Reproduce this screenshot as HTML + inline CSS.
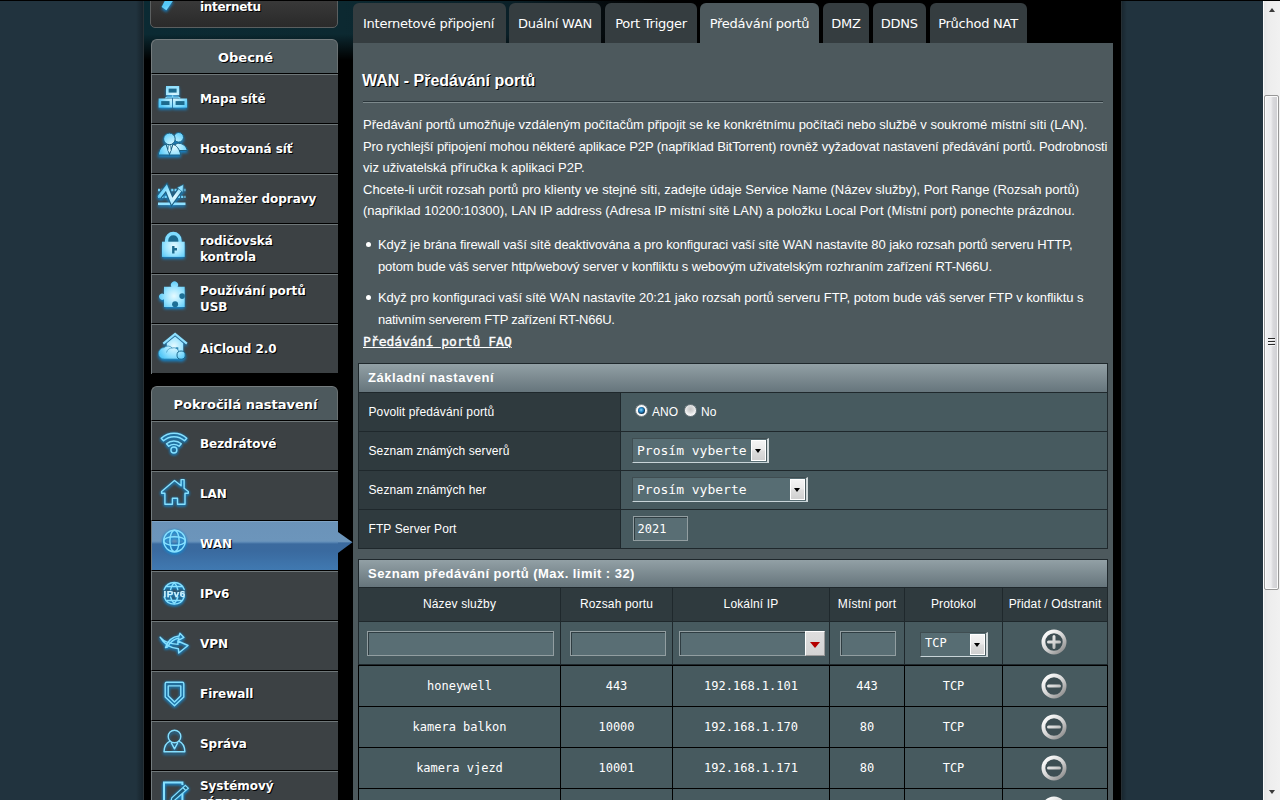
<!DOCTYPE html>
<html lang="cs">
<head>
<meta charset="utf-8">
<title>ASUS Wireless Router RT-N66U - Předávání portů</title>
<style>
*{box-sizing:border-box;}
html,body{margin:0;padding:0;}
body{width:1280px;height:800px;overflow:hidden;position:relative;background:#21333e;font-family:"Liberation Sans",Arial,sans-serif;font-size:12px;color:#fff;}
.abs{position:absolute;}
#topline{left:0;top:0;width:1280px;height:1px;background:#000;z-index:50;}
#band{left:143px;top:0;width:978px;height:800px;background:#000;}
#band:before{content:"";position:absolute;left:0;top:0;width:520px;height:62px;background:linear-gradient(180deg,rgba(0,0,0,0) 0px,rgba(0,0,0,0) 34px,#000 60px),linear-gradient(90deg,#0b2a33 0px,#0c2931 200px,#0a2028 365px,#04090b 470px,#000 520px);}
#shadowL{left:136px;top:0;width:7px;height:800px;background:linear-gradient(90deg,rgba(0,0,0,0),rgba(0,0,0,.3));}
#shadowR{left:1121px;top:0;width:6px;height:800px;background:linear-gradient(90deg,rgba(0,0,0,.28),rgba(0,0,0,0));}
#edgeL{left:143px;top:0;width:1px;height:800px;background:#293237;}
#edgeR{left:1121px;top:0;width:1px;height:800px;background:#262f34;}

/* ---------- sidebar ---------- */
.mfont{font-family:"DejaVu Sans",Verdana,sans-serif;font-weight:bold;text-shadow:1px 1px 0 #000;}
#qis{left:150px;top:-30px;width:188px;height:58px;border:1px solid #5b5f60;border-radius:5px;background:linear-gradient(180deg,#454545 0%,#3a3a3a 50%,#2a2a2a 100%);}
#qis span{position:absolute;left:49px;top:29px;font-size:12px;letter-spacing:-.3px;line-height:14px;}
#qis svg{position:absolute;left:0;top:29px;}
.grp{left:151px;width:187px;}
.grp .hd{height:34px;background:#4d595d;border:1px solid #757c7e;border-bottom:0;border-right-color:#6a7173;border-radius:6px 6px 0 0;text-align:center;font-size:13px;line-height:36px;padding-left:2px;overflow:hidden;}
.grp .it{position:relative;height:50px;border-top:1px solid #000;border-left:1px solid #747c7f;background:#3c4144;}
.grp .it:before{content:"";position:absolute;left:0;top:0;right:0;height:1px;background:#6f7779;}
.grp .it .tx{position:absolute;left:48px;top:1px;height:48px;display:flex;align-items:center;font-size:12px;letter-spacing:-.05px;line-height:16px;}
.grp.g2 .it .tx{top:-1px;}
.grp .it svg{position:absolute;left:0;top:2px;}
.grp .end{height:1px;background:#000;border-left:1px solid #747c7f;}
.grp .it.cur{background:linear-gradient(180deg,#6b93b9 0px,#6c95bb 20px,#5f8cb8 21px,#3b6a9e 23px,#3a6a9f 30px,#4079b1 49px);}
.grp .it.cur:after{content:"";position:absolute;left:186px;top:11px;width:15px;height:21px;background:linear-gradient(180deg,#6c95bb 0px,#6c95bb 9.5px,#3b6a9e 11px,#3b6b9f 21px);clip-path:polygon(0 0,14.5px 10.3px,0 21px);}
.grp .it.cur:before{background:#7fa3c4;}

/* ---------- tabs ---------- */
.tab{top:3px;height:40px;background:#353d40;border-radius:6px 6px 0 0;font-family:"DejaVu Sans",Verdana,sans-serif;font-size:13px;letter-spacing:-.25px;text-align:center;line-height:41px;color:#fff;white-space:nowrap;}
.tab.on{background:#4d595d;}
/* ---------- panel ---------- */
#panel{left:353px;top:43px;width:760px;height:760px;background:#4d595d;}
#title{left:9px;top:29px;font-size:16px;font-weight:bold;line-height:18px;text-shadow:1px 1px 0 #000;white-space:nowrap;}
#hr{left:10px;top:58px;width:740px;height:2px;background:#2a353a;border-bottom:1px solid #7d898c;}
.desc{font-size:13px;line-height:21.5px;white-space:nowrap;}
.desc span{display:block;}
#desc1{left:10px;top:71px;}
#ul{left:16px;top:191px;}
#ul .li{position:relative;padding-left:9px;margin-bottom:10px;}
#ul .li:before{content:"";position:absolute;left:-3px;top:8px;width:5px;height:5px;border-radius:50%;background:#fff;}
#faq{left:10px;top:291px;font-family:"DejaVu Sans Mono","Liberation Mono",monospace;font-weight:normal;-webkit-text-stroke:.35px #fff;text-underline-offset:1px;text-decoration-thickness:1.5px;font-size:13px;line-height:16px;text-decoration:underline;color:#fff;white-space:nowrap;}

/* ---------- tables (coords relative to panel: abs-353, abs-43) ---------- */
.tbl{background:#1f282c;}
.tbl .th0{position:absolute;left:1px;top:1px;width:748px;height:28px;background:linear-gradient(180deg,#92a0a5 0%,#66757c 100%);font-weight:bold;font-size:13px;letter-spacing:.55px;line-height:27px;padding-left:9px;white-space:nowrap;}
.tbl .c{position:absolute;white-space:nowrap;}
.tbl .l{background:#2f3a3e;font-size:12px;}
.tbl .r{background:#475a5f;}
#t1 .l{left:1px;width:261px;height:38px;line-height:39px;padding-left:9.500px;letter-spacing:.1px;}
#t1 .r{left:263px;width:486px;height:38px;}
.mono{font-family:"DejaVu Sans Mono","Liberation Mono",monospace;}
.sel{position:absolute;height:25px;background:#576d73;border:1px solid;border-width:1px 2px 1px 1px;border-color:#3f4d51 #d0d8da #c8d4d8 #3f4d51;font-size:13px;line-height:24px;padding-left:4px;color:#fff;}
.sel i{position:absolute;right:1px;top:1px;width:15px;height:21px;background:linear-gradient(180deg,#f4f4f4 0%,#e9e9e9 48%,#dddddd 52%,#d0d0d0 100%);border:1px solid #fff;box-shadow:1px 0 0 #4b5a5e;}
.sel i:after{content:"";position:absolute;left:3px;top:8px;border:3.5px solid transparent;border-top:4px solid #000;border-bottom:0;width:0;height:0;}
.inp{position:absolute;height:25px;background:#596e74;border:1px solid #929ea1;box-shadow:inset 1px 1px 0 #2f3d42;font-size:12px;line-height:24px;padding-left:3.5px;color:#fff;}
.radio{position:absolute;width:13px;height:13px;border-radius:50%;background:radial-gradient(circle at 50% 38%,#c6c6c6 0%,#d9d9d9 35%,#f3f3f3 62%,#ffffff 100%);border:1px solid #6e7b80;}
.radio.on{background:#f7f7f7;}
.radio.on:after{content:"";position:absolute;left:2px;top:2px;width:7px;height:7px;border-radius:50%;background:radial-gradient(circle at 45% 42%,#9ad6f5 0%,#3597d3 28%,#1f74ae 45%,#0f3a5c 62%,#0a2238 100%);}
#t2 .th0{height:27px;line-height:27px;letter-spacing:.46px;}
#t2 .l{height:33px;line-height:33px;text-align:center;top:29px;letter-spacing:.15px;}
#t2 .r{height:42px;top:63px;}
#t3{background:#000;}
#t3 .c{background:#475a5f;height:40px;line-height:41px;text-align:center;font-size:12px;}
.btn{position:absolute;width:26px;height:26px;}
.dd{position:absolute;left:132px;top:9px;width:20px;height:25px;background:linear-gradient(180deg,#dedede,#d3d3d3);border:1px solid;border-color:#fff #9a9a9a #9a9a9a #fff;}
.dd:after{content:"";position:absolute;left:4px;top:10px;width:0;height:0;border:5px solid transparent;border-top:6px solid #b40000;border-bottom:0;}

/* ---------- browser scrollbar ---------- */
#sb{left:1263px;top:1px;width:17px;height:799px;background:linear-gradient(90deg,#fdfdfd 0px,#fdfdfd 1px,#e6e6e6 1.5px,#ededed 5px,#f1f1f1 17px);z-index:60;}
#sb .thumb{position:absolute;left:1px;top:94px;width:15px;height:495px;border:1px solid #979797;border-radius:2px;background:linear-gradient(90deg,#f3f3f3 0px,#ececee 6px,#d9d9dc 8px,#cfcfd3 13px);box-shadow:inset 0 0 0 1px #fbfbfb;}
#sb .grip{position:absolute;left:5px;top:337px;width:7px;height:8px;background:linear-gradient(180deg,#2c2c2c 0,#2c2c2c 1px,#f6f6f6 1px,#f6f6f6 2px,rgba(0,0,0,0) 2px,rgba(0,0,0,0) 3px,#2c2c2c 3px,#2c2c2c 4px,#f6f6f6 4px,#f6f6f6 5px,rgba(0,0,0,0) 5px,rgba(0,0,0,0) 6px,#2c2c2c 6px,#2c2c2c 7px,#f6f6f6 7px,#f6f6f6 8px);}
#sb .au,#sb .ad{position:absolute;left:6px;width:0;height:0;border:3.5px solid transparent;}
#sb .au{top:7px;border-bottom:4px solid #3a3a3a;border-top:0;}
#sb .ad{top:789px;border-top:4px solid #3a3a3a;border-bottom:0;}
</style>
</head>
<body>

<svg width="0" height="0" style="position:absolute">
  <defs>
    <linearGradient id="sg" gradientUnits="userSpaceOnUse" x1="4" y1="3" x2="22" y2="23"><stop offset="0" stop-color="#ffffff"/><stop offset=".5" stop-color="#d6d6d6"/><stop offset="1" stop-color="#8d8d8d"/></linearGradient>

    <filter id="glow" x="-40%" y="-40%" width="180%" height="190%" color-interpolation-filters="sRGB">
      <feGaussianBlur in="SourceAlpha" stdDeviation="1.7" result="b"/>
      <feOffset in="b" dy="1.6" result="o"/>
      <feFlood flood-color="#1488cf" flood-opacity=".95"/>
      <feComposite in2="o" operator="in" result="g"/>
      <feMerge><feMergeNode in="g"/><feMergeNode in="SourceGraphic"/></feMerge>
    </filter>
    <filter id="glow2" x="-40%" y="-40%" width="180%" height="190%" color-interpolation-filters="sRGB">
      <feGaussianBlur in="SourceAlpha" stdDeviation="1.5" result="b"/>
      <feOffset in="b" dy="0.8" result="o"/>
      <feFlood flood-color="#1488cf" flood-opacity="1"/>
      <feComposite in2="o" operator="in" result="g"/>
      <feMerge><feMergeNode in="g"/><feMergeNode in="g"/><feMergeNode in="SourceGraphic"/></feMerge>
    </filter>
    <radialGradient id="cy" gradientUnits="userSpaceOnUse" cx="22" cy="20" r="16"><stop offset="0" stop-color="#e6faff"/><stop offset=".55" stop-color="#9be4ff"/><stop offset="1" stop-color="#55c8f8"/></radialGradient>
    <g id="ring"><circle cx="13" cy="13" r="10.600" fill="#3d4e53" stroke="url(#sg)" stroke-width="3.800"/></g>
  </defs>
</svg>
<div id="shadowL" class="abs"></div>
<div id="shadowR" class="abs"></div>
<div id="band" class="abs"></div>
<div id="edgeL" class="abs"></div>
<div id="edgeR" class="abs"></div>
<div id="topline" class="abs"></div>

<div id="sb" class="abs"><div class="au"></div><div class="thumb"></div><div class="grip"></div><div class="ad"></div></div>

<!-- SIDEBAR -->
<div id="qis" class="abs mfont"><svg width="40" height="24" viewBox="0 0 40 24"><g filter="url(#glow)"><path d="M14.200 0h8.400l-7.200 10.300l-4.800-3.200z" fill="url(#cy)"/></g></svg><span>internetu</span></div>

<div class="abs grp mfont" style="top:39px">
  <div class="hd">Obecné</div>
  <div class="it"><svg width="48" height="48" viewBox="0 0 48 48"><g filter="url(#glow)"><g fill="#1c6a8e" stroke="url(#cy)" stroke-width="2.6"><rect x="15.3" y="11.3" width="10.6" height="6.6"/><rect x="7.9" y="23.8" width="10.9" height="6.5"/><rect x="22.3" y="23.8" width="11.5" height="6.5"/></g><path d="M20.6 19.2v2.6M13.4 22.3l1.6-1.2h11.4l1.8 1.2" fill="none" stroke="#7fd6fa" stroke-width="1.3"/></g></svg><span class="tx">Mapa sítě</span></div>
  <div class="it"><svg width="48" height="48" viewBox="0 0 48 48"><g filter="url(#glow)"><g fill="url(#cy)" stroke="#1a5f82" stroke-width="1"><circle cx="26.7" cy="11.3" r="4.8"/><path d="M21 24.5c0.500-4.500 2.500-7 5.700-7.200c4.500 0.200 7.500 3 8.600 7.200z"/><path d="M6.300 29c0.800-5.800 4-10 8-10.800h6.200c4 0.800 7.200 5 8.200 10.800z"/><circle cx="17.400" cy="12.900" r="5.800"/></g><path d="M14.200 18.800l3.300 9.400l3.300-9.400" fill="none" stroke="#1a5f82" stroke-width="1.1"/><path d="M16.600 19.200h1.800l0.700 5.200l-1.600 3.200l-1.600-3.200z" fill="#d9f6ff" stroke="#1a5f82" stroke-width=".6"/></g></svg><span class="tx">Hostovaná síť</span></div>
  <div class="it"><svg width="48" height="48" viewBox="0 0 48 48"><g filter="url(#glow)"><path d="M6 14h27.500M6 20.900h27.500" stroke="#6fd2fa" stroke-width="2.300" stroke-dasharray="2.200 1.100" fill="none"/><path d="M6 27.800h27.500" stroke="#8fe0ff" stroke-width="2.600" fill="none"/><path d="M6.800 21.300l7.600-9.800l5.600 13.800l9-12.600" fill="none" stroke="#1d5f82" stroke-width="5.600" stroke-linejoin="miter"/><path d="M6.800 21.300l7.600-9.800l5.600 13.800l9-12.600" fill="none" stroke="url(#cy)" stroke-width="3.400" stroke-linejoin="miter"/><path d="M25.200 11.600l6.300-3.200l-0.600 8z" fill="#8fe0ff" stroke="#1d5f82" stroke-width=".6"/></g></svg><span class="tx">Manažer dopravy</span></div>
  <div class="it"><svg width="48" height="48" viewBox="0 0 48 48"><g filter="url(#glow)"><path d="M14.600 16.500v-2.300a6.700 6.700 0 0 1 13.400 0v2.300" fill="#1c6a8e" stroke="#7fdcff" stroke-width="3.300"/><rect x="10" y="15.700" width="22.700" height="15.200" fill="url(#cy)"/><path d="M20.100 20.100h2.400v2h2.500v2.500h-2.500v3h-2.400z" fill="#1c6a8e"/></g></svg><span class="tx">rodičovská<br>kontrola</span></div>
  <div class="it"><svg width="48" height="48" viewBox="0 0 48 48"><g filter="url(#glow)"><path d="M12 10.800h7.400a3.600 3.600 0 1 1 6.200 0h7.100v20.100h-20.700v-7.700a3.100 3.100 0 1 1 0-5z" fill="url(#cy)"/><circle cx="30.100" cy="20.100" r="2.800" fill="#1d6f96"/><circle cx="23.100" cy="28.300" r="3" fill="#1d6f96"/></g></svg><span class="tx">Používání portů<br>USB</span></div>
  <div class="it"><svg width="48" height="48" viewBox="0 0 48 48"><g filter="url(#glow)"><path d="M11.300 17.700l11.800-9.700l11.800 9.700" fill="none" stroke="#8fe0ff" stroke-width="2.200"/><path d="M14.800 17.300l8.300-6.800l8.100 6.800v9h-16.400z" fill="url(#cy)"/><rect x="23.700" y="21.300" width="2.600" height="2.600" fill="#2d86b3"/><path d="M12.400 33a5.700 5.700 0 0 1-0.400-11.400a5.600 5.600 0 0 1 8.200 0.400a5.200 5.200 0 0 1 6.600 3.600l1 7.400z" fill="url(#cy)" stroke="#2d86b3" stroke-width=".7"/><path d="M14.500 26.500a6 6 0 0 1 5.700-4.500" fill="none" stroke="#2d86b3" stroke-width=".6"/><circle cx="29.100" cy="29.100" r="4.100" fill="url(#cy)" stroke="#1c6a8e" stroke-width="1"/></g></svg><span class="tx">AiCloud 2.0</span></div>
  <div class="end"></div>
</div>

<div class="abs grp g2 mfont" style="top:386px">
  <div class="hd">Pokročilá nastavení</div>
  <div class="it"><svg width="48" height="48" viewBox="0 0 48 48"><g filter="url(#glow2)" fill="none" stroke="#86e0ff" stroke-width="1.4" stroke-linejoin="round" stroke-linecap="round"><path d="M9.200 15.200a19 19 0 0 1 25.600 0l-2.300 2.600a15.500 15.500 0 0 0-21 0z"/><path d="M14.500 20.800a11.200 11.200 0 0 1 14.800 0l-2.200 2.500a7.900 7.900 0 0 0-10.400 0z"/><circle cx="21.900" cy="27" r="3"/></g></svg><span class="tx">Bezdrátové</span></div>
  <div class="it"><svg width="48" height="48" viewBox="0 0 48 48"><g filter="url(#glow2)" fill="none" stroke="#86e0ff" stroke-width="1.4" stroke-linejoin="round" stroke-linecap="round"><path d="M22.500 7.500l6.600 5.300v-6.200h3v8.600l4.200 3.300v1.700h-3.300v11h-7.500v-6h-5.100v6h-7.500v-11h-3.300v-1.700z"/></g></svg><span class="tx">LAN</span></div>
  <div class="it cur"><svg width="48" height="48" viewBox="0 0 48 48"><g filter="url(#glow2)" fill="none" stroke="#86e0ff" stroke-width="1.4" stroke-linejoin="round" stroke-linecap="round"><circle cx="22.500" cy="18" r="10.800"/><ellipse cx="22.500" cy="18" rx="4.600" ry="10.800"/><ellipse cx="22.500" cy="18" rx="10.800" ry="4.300"/></g></svg><span class="tx">WAN</span></div>
  <div class="it"><svg width="48" height="48" viewBox="0 0 48 48"><g filter="url(#glow2)"><g fill="none" stroke="#86e0ff" stroke-width="1.4" stroke-linejoin="round" stroke-linecap="round"><path d="M12.200 16.600a10.600 10.600 0 0 1 20 0M12.200 24a10.600 10.600 0 0 0 20 0"/><path d="M18.600 16.600c0.600-3 1.800-5.300 3.600-6.800c1.800 1.500 3 3.800 3.600 6.800M18.600 24c0.600 2.800 1.800 5 3.600 6.500c1.800-1.500 3-3.700 3.600-6.500M14.200 13.500h16M15 27.500h14.400"/></g><text x="22.600" y="23.900" text-anchor="middle" font-family="'Liberation Sans',Arial,sans-serif" font-weight="bold" font-size="9.800" letter-spacing=".5" fill="#d0f4ff" stroke="#d0f4ff" stroke-width=".25" style="text-shadow:none">IPv6</text></g></svg><span class="tx">IPv6</span></div>
  <div class="it"><svg width="48" height="48" viewBox="0 0 48 48"><g filter="url(#glow2)" fill="none" stroke="#86e0ff" stroke-width="1.4" stroke-linejoin="round" stroke-linecap="round"><path d="M13.500 24.600c2-6.500 6.500-10.800 13.600-11.600l0.800-2.800l4 4.200l-5.500 3l0.500-2.400c-5 1-8.800 4-11.400 9z"/><path d="M8.100 14.100c3.500 4.200 9.500 6.800 17.900 7.300l-0.200-3.400l10.200 4.500l-9.300 7.500l-0.300-4.200c-8-0.800-14-4-18.300-11.700z"/></g></svg><span class="tx">VPN</span></div>
  <div class="it"><svg width="48" height="48" viewBox="0 0 48 48"><g filter="url(#glow2)" fill="none" stroke="#86e0ff" stroke-width="1.4" stroke-linejoin="round" stroke-linecap="round"><path d="M14.600 9.300h15.800a1.400 1.400 0 0 1 1.400 1.400v13.300l-9.300 8.700l-9.300-8.700v-13.300a1.400 1.400 0 0 1 1.400-1.400z"/><path d="M16.200 12.900h12.600v9.900l-6.300 6.300l-6.300-6.300z"/></g></svg><span class="tx">Firewall</span></div>
  <div class="it"><svg width="48" height="48" viewBox="0 0 48 48"><g filter="url(#glow)" fill="none" stroke="#86e0ff" stroke-width="1.4" stroke-linejoin="round" stroke-linecap="round"><circle cx="22.500" cy="13.500" r="6.300"/><path d="M18 18.200c-3.800 1.600-5.800 5.400-6 10.600h20.900c-0.200-5.200-2.200-9-6-10.600M19.300 19.800l3.200 6l3.200-6"/></g></svg><span class="tx">Správa</span></div>
  <div class="it"><svg width="48" height="48" viewBox="0 0 48 48"><g filter="url(#glow2)" fill="none" stroke="#86e0ff"><path d="M30.400 12v-2.600h-18.400v22h18.400v-12" stroke-width="2"/><path d="M33.400 12.300l2.900 2.900l-14 12.300l-3.300 0.800l0.800-3.600z M30.800 14.500l3 3" stroke-width="1.200" fill="#1d5a78"/></g></svg><span class="tx">Systémový<br>záznam</span></div>
</div>


<!-- TABS -->
<div class="abs tab" style="left:353px;width:153px;padding-right:2px">Internetové připojení</div>
<div class="abs tab" style="left:509px;width:92px">Duální WAN</div>
<div class="abs tab" style="left:605px;width:92px">Port Trigger</div>
<div class="abs tab on" style="left:700px;width:119px">Předávání portů</div>
<div class="abs tab" style="left:823px;width:46px">DMZ</div>
<div class="abs tab" style="left:872.500px;width:53.500px">DDNS</div>
<div class="abs tab" style="left:929.500px;width:97px">Průchod NAT</div>

<!-- PANEL -->
<div id="panel" class="abs">
  <div id="title" class="abs">WAN - Předávání portů</div>
  <div id="hr" class="abs"></div>
  <div id="desc1" class="abs desc">
    <span style="letter-spacing:-.021px">Předávání portů umožňuje vzdáleným počítačům připojit se ke konkrétnímu počítači nebo službě v soukromé místní síti (LAN).</span>
    <span style="letter-spacing:-.087px">Pro rychlejší připojení mohou některé aplikace P2P (například BitTorrent) rovněž vyžadovat nastavení předávání portů. Podrobnosti</span>
    <span>viz uživatelská příručka k aplikaci P2P.</span>
    <span>Chcete-li určit rozsah portů pro klienty ve stejné síti, zadejte údaje Service Name (Název služby), Port Range (Rozsah portů)</span>
    <span style="letter-spacing:-.025px">(například 10200:10300), LAN IP address (Adresa IP místní sítě LAN) a položku Local Port (Místní port) ponechte prázdnou.</span>
  </div>
  <div id="ul" class="abs desc">
    <div class="li"><span style="letter-spacing:-.087px">Když je brána firewall vaší sítě deaktivována a pro konfiguraci vaší sítě WAN nastavíte 80 jako rozsah portů serveru HTTP,</span>
      <span style="letter-spacing:-.117px">potom bude váš server http/webový server v konfliktu s webovým uživatelským rozhraním zařízení RT-N66U.</span></div>
    <div class="li"><span style="letter-spacing:-.05px">Když pro konfiguraci vaší sítě WAN nastavíte 20:21 jako rozsah portů serveru FTP, potom bude váš server FTP v konfliktu s</span>
      <span style="letter-spacing:-.236px">nativním serverem FTP zařízení RT-N66U.</span></div>
  </div>
  <div id="faq" class="abs">Předávání portů FAQ</div>

  <!-- basic settings table -->
  <div id="t1" class="abs tbl" style="left:5px;top:320px;width:750px;height:186px">
    <div class="th0">Základní nastavení</div>
    <div class="c l" style="top:30px">Povolit předávání portů</div>
    <div class="c r" style="top:30px">
      <span class="radio on" style="left:14px;top:11px"></span><span class="abs" style="left:31px;top:12px;line-height:14px">ANO</span>
      <span class="radio" style="left:63px;top:11px"></span><span class="abs" style="left:80px;top:12px;line-height:14px">No</span>
    </div>
    <div class="c l" style="top:69px">Seznam známých serverů</div>
    <div class="c r" style="top:69px"><span class="sel mono" style="left:11px;top:6px;width:137px">Prosím vyberte<i></i></span></div>
    <div class="c l" style="top:108px">Seznam známých her</div>
    <div class="c r" style="top:108px"><span class="sel mono" style="left:11px;top:6px;width:176px">Prosím vyberte<i></i></span></div>
    <div class="c l" style="top:147px">FTP Server Port</div>
    <div class="c r" style="top:147px"><span class="inp mono" style="left:12px;top:6px;width:55px">2021</span></div>
  </div>

  <!-- port forwarding list header + input row -->
  <div id="t2" class="abs tbl" style="left:5px;top:516px;width:750px;height:106px">
    <div class="th0">Seznam předávání portů (Max. limit : 32)</div>
    <div class="c l" style="left:1px;width:201px">Název služby</div>
    <div class="c l" style="left:203px;width:111px">Rozsah portu</div>
    <div class="c l" style="left:315px;width:156px">Lokální IP</div>
    <div class="c l" style="left:472px;width:74px">Místní port</div>
    <div class="c l" style="left:547px;width:97px">Protokol</div>
    <div class="c l" style="left:645px;width:104px">Přidat / Odstranit</div>
    <div class="c r" style="left:1px;width:201px"><span class="inp" style="left:8px;top:9px;width:187px"></span></div>
    <div class="c r" style="left:203px;width:111px"><span class="inp" style="left:9px;top:9px;width:96px"></span></div>
    <div class="c r" style="left:315px;width:156px"><span class="inp" style="left:6px;top:9px;width:126px;border-right:0"></span><span class="dd"></span></div>
    <div class="c r" style="left:472px;width:74px"><span class="inp" style="left:10px;top:9px;width:56px"></span></div>
    <div class="c r" style="left:547px;width:97px"><span class="sel mono" style="left:15px;top:10px;width:68px;font-size:12px;line-height:21px">TCP<i></i></span></div>
    <div class="c r" style="left:645px;width:104px"><svg class="btn" style="left:38.300px;top:7px" viewBox="0 0 26 26"><use href="#ring"/><path d="M7.5 13h11M13 7.5v11" stroke="url(#sg)" stroke-width="3" stroke-linecap="round" fill="none"/></svg></div>
  </div>

  <!-- port forwarding data rows -->
  <div id="t3" class="abs mono" style="left:5px;top:622px;width:750px;height:180px">
    <div class="c abs" style="left:1px;top:1px;width:201px">honeywell</div>
    <div class="c abs" style="left:203px;top:1px;width:111px">443</div>
    <div class="c abs" style="left:315px;top:1px;width:156px">192.168.1.101</div>
    <div class="c abs" style="left:472px;top:1px;width:74px">443</div>
    <div class="c abs" style="left:547px;top:1px;width:97px">TCP</div>
    <div class="c abs" style="left:645px;top:1px;width:104px"><svg class="btn" style="left:38.300px;top:7px" viewBox="0 0 26 26"><use href="#ring"/><path d="M7.5 13h11" stroke="url(#sg)" stroke-width="3" stroke-linecap="round" fill="none"/></svg></div>
    <div class="c abs" style="left:1px;top:42px;width:201px">kamera balkon</div>
    <div class="c abs" style="left:203px;top:42px;width:111px">10000</div>
    <div class="c abs" style="left:315px;top:42px;width:156px">192.168.1.170</div>
    <div class="c abs" style="left:472px;top:42px;width:74px">80</div>
    <div class="c abs" style="left:547px;top:42px;width:97px">TCP</div>
    <div class="c abs" style="left:645px;top:42px;width:104px"><svg class="btn" style="left:38.300px;top:7px" viewBox="0 0 26 26"><use href="#ring"/><path d="M7.5 13h11" stroke="url(#sg)" stroke-width="3" stroke-linecap="round" fill="none"/></svg></div>
    <div class="c abs" style="left:1px;top:83px;width:201px">kamera vjezd</div>
    <div class="c abs" style="left:203px;top:83px;width:111px">10001</div>
    <div class="c abs" style="left:315px;top:83px;width:156px">192.168.1.171</div>
    <div class="c abs" style="left:472px;top:83px;width:74px">80</div>
    <div class="c abs" style="left:547px;top:83px;width:97px">TCP</div>
    <div class="c abs" style="left:645px;top:83px;width:104px"><svg class="btn" style="left:38.300px;top:7px" viewBox="0 0 26 26"><use href="#ring"/><path d="M7.5 13h11" stroke="url(#sg)" stroke-width="3" stroke-linecap="round" fill="none"/></svg></div>
    <div class="c abs" style="left:1px;top:124px;width:201px">kamera zahrada</div>
    <div class="c abs" style="left:203px;top:124px;width:111px">10002</div>
    <div class="c abs" style="left:315px;top:124px;width:156px">192.168.1.172</div>
    <div class="c abs" style="left:472px;top:124px;width:74px">80</div>
    <div class="c abs" style="left:547px;top:124px;width:97px">TCP</div>
    <div class="c abs" style="left:645px;top:124px;width:104px"><svg class="btn" style="left:38.300px;top:7px" viewBox="0 0 26 26"><use href="#ring"/><path d="M7.5 13h11" stroke="url(#sg)" stroke-width="3" stroke-linecap="round" fill="none"/></svg></div>
  </div>
</div>
</body>
</html>
